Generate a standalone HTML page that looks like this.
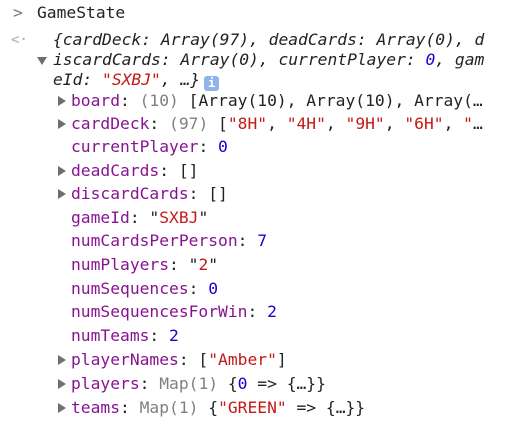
<!DOCTYPE html>
<html><head><meta charset="utf-8"><style>
body{margin:0;width:512px;height:421px;background:#fff;overflow:hidden;font-family:"DejaVu Sans Mono","Liberation Mono",monospace;font-size:16.3px;color:#222;position:relative}
.l{position:absolute;white-space:pre;line-height:20px;height:20px}
.p{color:#881391}.s{color:#c41a16}.n{color:#1c00cf}.g{color:#808080}.i{font-style:italic}
.t{position:absolute;width:0;height:0;border-top:5px solid transparent;border-bottom:5px solid transparent;border-left:8px solid #6e6e6e}
.td{position:absolute;width:0;height:0;border-left:5px solid transparent;border-right:5px solid transparent;border-top:8px solid #6e6e6e}
.info{display:inline-block;width:15px;height:15px;background:#8fb4ea;color:#fff;border-radius:3px;font-size:12px;line-height:15px;text-align:center;font-style:normal;font-weight:bold;vertical-align:-2px;margin-left:4px}
</style></head><body>
<div class="l" style="left:13px;top:3px;color:#777">&gt;</div>
<div class="l" style="left:37px;top:3px">GameState</div>
<div class="l" style="left:11px;top:30px;color:#aaa;font-size:14px">&lt;·</div>
<div class="l i" style="left:53px;top:30px">{cardDeck: Array(97), deadCards: Array(0), d</div>
<div class="td" style="left:37px;top:57px"></div>
<div class="l i" style="left:53px;top:50px">iscardCards: Array(0), currentPlayer: <span class="n">0</span>, gam</div>
<div class="l i" style="left:53px;top:70px">eId: <span class="s">"SXBJ"</span>, …}<span class="info">i</span></div>
<div class="t" style="left:58px;top:96px"></div>
<div class="l" style="left:71px;top:91px"><span class="p">board</span>: <span class="g">(10)</span> [Array(10), Array(10), Array(…</div>
<div class="t" style="left:58px;top:119px"></div>
<div class="l" style="left:71px;top:114px"><span class="p">cardDeck</span>: <span class="g">(97)</span> [<span class="s">"8H"</span>, <span class="s">"4H"</span>, <span class="s">"9H"</span>, <span class="s">"6H"</span>, <span class="s">"</span>…</div>
<div class="l" style="left:71px;top:137px"><span class="p">currentPlayer</span>: <span class="n">0</span></div>
<div class="t" style="left:58px;top:166px"></div>
<div class="l" style="left:71px;top:161px"><span class="p">deadCards</span>: []</div>
<div class="t" style="left:58px;top:189px"></div>
<div class="l" style="left:71px;top:184px"><span class="p">discardCards</span>: []</div>
<div class="l" style="left:71px;top:208px"><span class="p">gameId</span>: "<span class="s">SXBJ</span>"</div>
<div class="l" style="left:71px;top:231px"><span class="p">numCardsPerPerson</span>: <span class="n">7</span></div>
<div class="l" style="left:71px;top:255px"><span class="p">numPlayers</span>: "<span class="s">2</span>"</div>
<div class="l" style="left:71px;top:279px"><span class="p">numSequences</span>: <span class="n">0</span></div>
<div class="l" style="left:71px;top:302px"><span class="p">numSequencesForWin</span>: <span class="n">2</span></div>
<div class="l" style="left:71px;top:326px"><span class="p">numTeams</span>: <span class="n">2</span></div>
<div class="t" style="left:58px;top:355px"></div>
<div class="l" style="left:71px;top:350px"><span class="p">playerNames</span>: [<span class="s">"Amber"</span>]</div>
<div class="t" style="left:58px;top:379px"></div>
<div class="l" style="left:71px;top:374px"><span class="p">players</span>: <span class="g">Map(1)</span> {<span class="n">0</span> =&gt; {…}}</div>
<div class="t" style="left:58px;top:403px"></div>
<div class="l" style="left:71px;top:398px"><span class="p">teams</span>: <span class="g">Map(1)</span> {<span class="s">"GREEN"</span> =&gt; {…}}</div>
</body></html>
